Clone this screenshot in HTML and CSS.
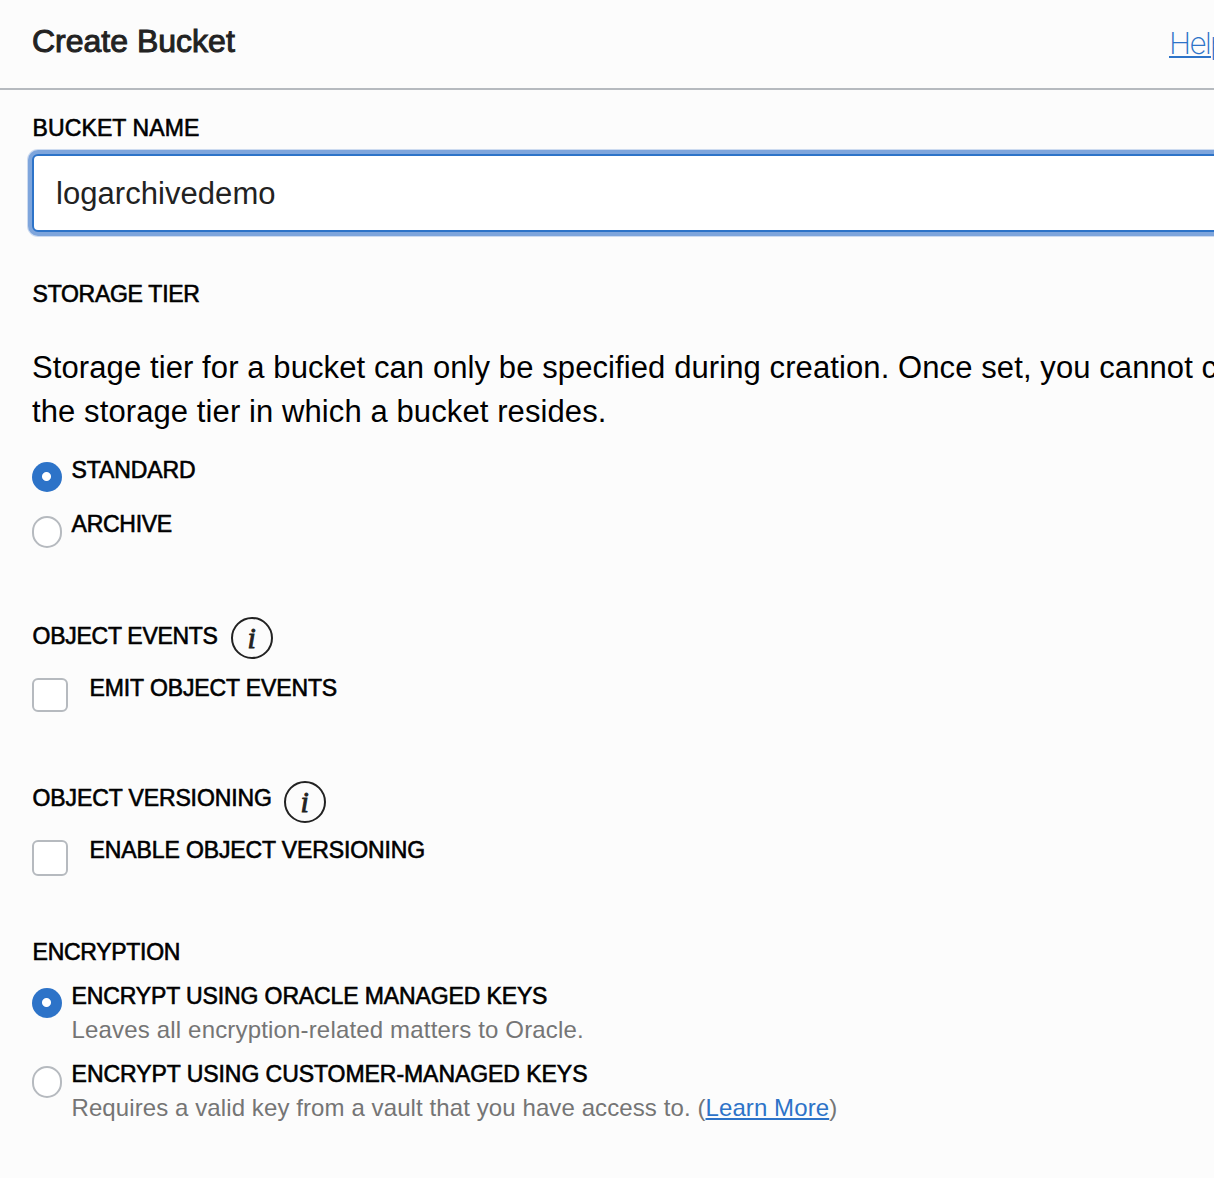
FILE: index.html
```html
<!DOCTYPE html>
<html lang="en">
<head>
<meta charset="utf-8">
<title>Create Bucket</title>
<link rel="stylesheet" href="styles.css">
</head>
<body>
<main class="dialog">
  <header class="dialog-header">
    <h1 class="title">Create Bucket</h1>
    <a class="link help" href="#">Help</a>
  </header>
  <form class="form">
    <label class="label loose" for="bucket-name">BUCKET NAME</label>
    <input class="input" id="bucket-name" type="text" value="logarchivedemo">

    <section class="storage">
      <h2 class="label tight">STORAGE TIER</h2>
      <p class="intro">Storage tier for a bucket can only be specified during creation. Once set, you cannot change<br>the storage tier in which a bucket resides.</p>
      <div class="option">
        <span class="radio checked"></span>
        <span class="label">STANDARD</span>
      </div>
      <div class="option archive">
        <span class="radio"></span>
        <span class="label tight">ARCHIVE</span>
      </div>
    </section>

    <section class="events">
      <div class="heading">
        <h2 class="label tight">OBJECT EVENTS</h2>
        <span class="info">i</span>
      </div>
      <div class="option check-option">
        <span class="checkbox"></span>
        <span class="label">EMIT OBJECT EVENTS</span>
      </div>
    </section>

    <section class="versioning">
      <div class="heading">
        <h2 class="label">OBJECT VERSIONING</h2>
        <span class="info">i</span>
      </div>
      <div class="option check-option">
        <span class="checkbox tall"></span>
        <span class="label">ENABLE OBJECT VERSIONING</span>
      </div>
    </section>

    <section class="encryption">
      <h2 class="label tight">ENCRYPTION</h2>
      <div class="option">
        <span class="radio checked"></span>
        <div class="option-body">
          <span class="label">ENCRYPT USING ORACLE MANAGED KEYS</span>
          <span class="hint">Leaves all encryption-related matters to Oracle.</span>
        </div>
      </div>
      <div class="option">
        <span class="radio"></span>
        <div class="option-body">
          <span class="label customer">ENCRYPT USING CUSTOMER-MANAGED KEYS</span>
          <span class="hint compact">Requires a valid key from a vault that you have access to. (<a class="link" href="#">Learn More</a>)</span>
        </div>
      </div>
    </section>
  </form>
</main>
</body>
</html>
```

FILE: styles.css
```css
* {
  box-sizing: border-box;
}

html {
  overflow: hidden;
}

body {
  margin: 0;
  height: 1178px;
  overflow: hidden;
  background: #fcfcfc;
  color: #000;
  font-family: "Liberation Sans", Arial, sans-serif;
  white-space: nowrap;
}

.dialog {
  width: 1260px;
}

.dialog-header {
  display: flex;
  justify-content: space-between;
  align-items: flex-start;
  height: 90px;
  padding: 23px 32px 0;
  border-bottom: 2px solid #b6babf;
}

.title {
  margin: 0;
  font-size: 32px;
  font-weight: 400;
  line-height: 36px;
  color: #222;
  -webkit-text-stroke: 1px #222;
}

.link {
  color: #2d73c8;
  text-decoration: underline;
  text-decoration-thickness: 2px;
  text-underline-offset: 2px;
}

.help {
  width: 59px;
  font-family: Inter, "Liberation Sans", sans-serif;
  font-size: 30px;
  font-weight: 250;
  line-height: 41px;
  letter-spacing: -1.7px;
}

.form {
  display: flex;
  flex-direction: column;
  padding: 21px 32px 0;
}

.label {
  display: block;
  margin: 0;
  padding: 1px 0 0 0.6px;
  font-size: 23px;
  font-weight: 400;
  line-height: 32px;
  letter-spacing: -0.12px;
  -webkit-text-stroke: 0.6px #000;
}

.label.tight {
  letter-spacing: -0.28px;
}

.label.loose {
  letter-spacing: 0.1px;
}

.label.customer {
  letter-spacing: -0.05px;
}

.input {
  height: 78px;
  margin: 10px 0 0;
  padding: 2px 22px 0;
  border: 2px solid #2d73c8;
  border-radius: 6px;
  outline: none;
  background: #fff;
  box-shadow: 0 0 0 4px #7ea5dc, 0 0 0 5px #cddbf0;
  color: #222;
  font: 31px "Liberation Sans", Arial, sans-serif;
  letter-spacing: 0.05px;
}

.storage {
  margin-top: 45px;
}

.intro {
  margin: 36px 0 19px;
  font-size: 31px;
  line-height: 44px;
  letter-spacing: 0.095px;
}

.option {
  display: flex;
  align-items: flex-start;
  gap: 9px;
}

.archive {
  margin-top: 15px;
}

.radio {
  width: 30px;
  height: 32px;
  margin-top: 9px;
  border: 2px solid #b6babf;
  border-radius: 15px;
  background: #fff;
}

.radio.checked {
  height: 30px;
  border: 0;
  background: radial-gradient(circle at 14.5px 14.5px, #fff 4px, #2d73c8 5px);
}

.heading {
  display: flex;
  align-items: flex-start;
  gap: 13px;
}

.versioning .heading {
  gap: 12px;
}

.info {
  width: 42px;
  height: 42px;
  border: 2px solid #222;
  border-radius: 50%;
  color: #222;
  font: italic 400 30px/38px "Liberation Serif", serif;
  text-align: center;
  -webkit-text-stroke: 0.9px #222;
}

.events,
.versioning {
  margin-top: 69px;
}

.events .heading .label {
  margin-top: 2px;
}

.check-option {
  gap: 21px;
  margin-top: 12px;
}

.versioning .check-option {
  margin-top: 10px;
}

.checkbox {
  width: 36px;
  height: 34px;
  margin-top: 7px;
  border: 2px solid #b6babf;
  border-radius: 6px;
  background: #fff;
}

.checkbox.tall {
  height: 36px;
}

.encryption {
  display: flex;
  flex-direction: column;
  gap: 11px;
  margin-top: 59px;
}

.option-body {
  display: flex;
  flex-direction: column;
  gap: 1px;
}

.hint {
  padding-left: 0.5px;
  color: #757575;
  font-size: 24px;
  line-height: 33px;
  letter-spacing: 0.17px;
}

.hint.compact {
  letter-spacing: 0.095px;
}
```
